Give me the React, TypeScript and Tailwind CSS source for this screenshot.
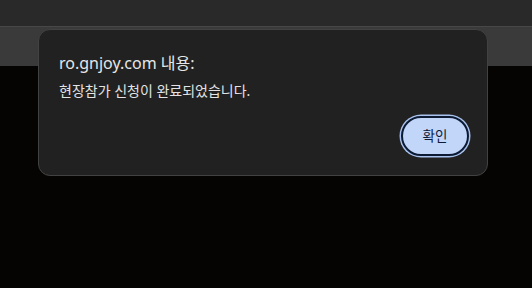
export default function App() {
  return (
    <div className="relative h-[288px] w-[532px] overflow-hidden bg-[#060403] font-['Noto_Sans','Noto_Sans_CJK_KR',sans-serif]">
      <div className="h-[26px] bg-[#292929]" />
      <div className="h-px bg-[#474747]" />
      <div className="h-[39px] bg-[#3a3a3a]" />

      <div className="absolute left-[38px] top-[29px] flex h-[147px] w-[450px] flex-col rounded-[12px] border border-[#424242] bg-[#212121] pl-[20px] pr-[18px] pt-[23px] pb-[19px]">
        <div className="text-[16px] leading-[20px] text-[#e6e6e6]">ro.gnjoy.com 내용:</div>
        <div className="mt-[9px] text-[14px] leading-[18px] text-[#e3e3e3]">현장참가 신청이 완료되었습니다.</div>
        <div className="mt-auto flex justify-end">
          <button className="flex h-[40px] w-[68px] items-center justify-center rounded-full border-[2.5px] border-[#0c1a33] bg-[#c2d6fa] text-[13.5px] text-[#0b1b38] shadow-[0_0_0_1.5px_#a9c3ee]">
            확인
          </button>
        </div>
      </div>
    </div>
  );
}
